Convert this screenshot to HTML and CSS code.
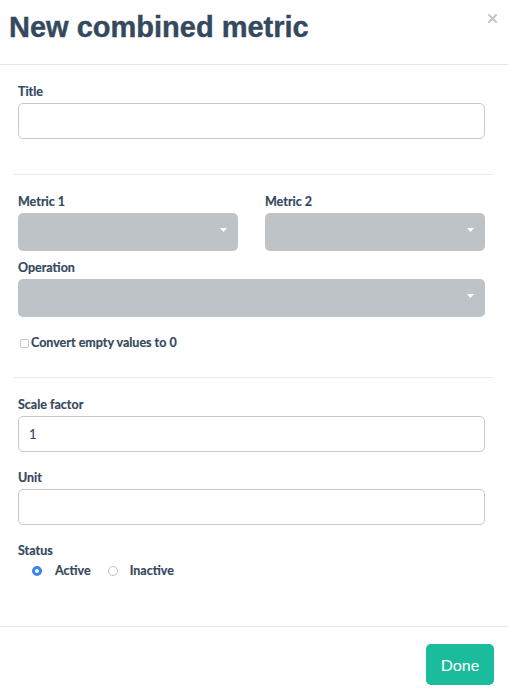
FILE: index.html
```html
<!DOCTYPE html>
<html>
<head>
<meta charset="utf-8">
<link rel="stylesheet" href="styles.css">
</head>
<body>
<div class="modal">
  <div class="modal-header">
    <h1 class="modal-title">New combined metric</h1>
    <button class="close" aria-label="Close">
      <svg width="9" height="9" viewBox="0 0 9 9"><path d="M1 1 L8 8 M8 1 L1 8" stroke="#c4c4c4" stroke-width="2" stroke-linecap="round" fill="none"/></svg>
    </button>
  </div>
  <div class="modal-body">
    <div class="section section-first">
      <label class="label">Title</label>
      <input class="input" type="text">
    </div>
    <div class="divider"></div>
    <div class="section">
      <div class="row">
        <div class="col">
          <label class="label">Metric 1</label>
          <div class="select"><svg class="caret" width="7" height="4" viewBox="0 0 7 4"><path d="M0 0 H7 L3.5 4 Z" fill="#fff"/></svg></div>
        </div>
        <div class="col">
          <label class="label">Metric 2</label>
          <div class="select"><svg class="caret" width="7" height="4" viewBox="0 0 7 4"><path d="M0 0 H7 L3.5 4 Z" fill="#fff"/></svg></div>
        </div>
      </div>
      <div class="field-gap-sm">
        <label class="label">Operation</label>
        <div class="select"><svg class="caret" width="7" height="4" viewBox="0 0 7 4"><path d="M0 0 H7 L3.5 4 Z" fill="#fff"/></svg></div>
      </div>
      <label class="checkbox-row"><span class="checkbox"></span><span class="check-text">Convert empty values to 0</span></label>
    </div>
    <div class="divider"></div>
    <div class="section section-last">
      <label class="label">Scale factor</label>
      <input class="input" type="text" value="1">
      <div class="field">
        <label class="label">Unit</label>
        <input class="input" type="text">
      </div>
      <div class="field">
        <label class="label status-label">Status</label>
        <div class="radios">
          <span class="radio-opt"><span class="radio radio-on"></span><span class="radio-text">Active</span></span>
          <span class="radio-opt"><span class="radio"></span><span class="radio-text">Inactive</span></span>
        </div>
      </div>
    </div>
  </div>
  <div class="modal-footer">
    <button class="btn-done">Done</button>
  </div>
</div>
</body>
</html>
```

FILE: styles.css
```css
* { box-sizing: border-box; }
html, body { margin: 0; padding: 0; background: #fff; }
body { font-family: Lato, "Noto Sans", sans-serif; color: #34495e; }

.modal { width: 508px; height: 698px; position: relative; display: flex; flex-direction: column; }

.modal-header {
  padding: 10px 9px 20px;
  border-bottom: 1px solid #e5e5e5;
}
.modal-title {
  margin: 0;
  font-family: "Liberation Sans", Arial, sans-serif;
  font-weight: 700;
  font-size: 29px;
  line-height: 34px;
  color: #34495e;
  -webkit-text-stroke: 0.4px #34495e;
}
.close {
  position: absolute;
  top: 14px;
  right: 11px;
  padding: 0;
  border: 0;
  background: none;
  width: 9px;
  height: 9px;
  display: block;
}
.close svg { display: block; }

.modal-body { padding: 0 14px 0 13px; }
.section { padding: 19px 9px 27px 5px; }
.section-first { padding-bottom: 35px; }
.section-last { padding-bottom: 48px; }
.divider { height: 1px; background: #ebebeb; }

.label {
  display: block;
  font-weight: 700;
  font-size: 12.5px;
  line-height: 15px;
  margin-bottom: 4px;
  color: #34495e;
  -webkit-text-stroke: 0.2px #34495e;
}

.input {
  display: block;
  width: 100%;
  height: 36px;
  border: 1px solid #c8c8c8;
  border-radius: 5px;
  padding: 0 10px;
  font-family: Lato, sans-serif;
  font-size: 13px;
  font-weight: 500;
  color: #34495e;
  background: #fff;
  outline: none;
}

.row { display: flex; gap: 27px; }
.col { flex: 1; }

.select {
  height: 38px;
  background: #bec3c7;
  border-radius: 5px;
  display: flex;
  justify-content: flex-end;
  align-items: center;
  padding-right: 11px;
}
.caret { display: block; margin-bottom: 4px; }

.field-gap-sm { margin-top: 9px; }
.field { margin-top: 18px; }

.checkbox-row {
  display: flex;
  align-items: center;
  margin-top: 18px;
  padding-left: 2px;
  font-weight: 700;
  font-size: 12.5px;
  line-height: 15px;
  -webkit-text-stroke: 0.2px #34495e;
}
.checkbox {
  width: 9px;
  height: 9px;
  border: 1px solid #c6c6c6;
  border-radius: 2px;
  background: #fff;
  margin-right: 2px;
  margin-top: 2px;
}

.status-label { margin-bottom: 5px; }
.radios {
  display: flex;
  gap: 17px;
  padding-left: 14px;
  font-weight: 700;
  font-size: 12.5px;
  line-height: 15px;
  -webkit-text-stroke: 0.2px #34495e;
}
.radio-opt { display: flex; align-items: center; gap: 13px; }
.radio {
  width: 10px;
  height: 10px;
  border-radius: 50%;
  border: 1px solid #c4c4c4;
  background: #fff;
  margin-top: 1px;
}
.radio-on {
  border: 3px solid #3a84f0;
  background: #fff;
}
.radio-opt + .radio-opt .radio-text { margin-left: -1px; }

.modal-footer {
  border-top: 1px solid #e5e5e5;
  padding: 17px 14px 0 0;
  display: flex;
  justify-content: flex-end;
}
.btn-done {
  width: 68px;
  height: 41px;
  border: 0;
  border-radius: 5px;
  background: #1abc9c;
  color: #fff;
  font-family: Lato, sans-serif;
  font-size: 16px;
  font-weight: 400;
  padding: 0;
}
```
